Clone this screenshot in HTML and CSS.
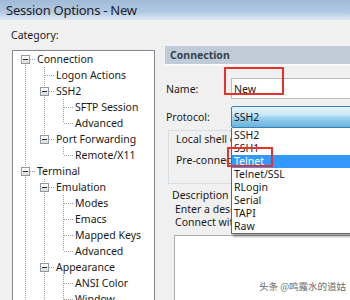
FILE: index.html
```html
<!DOCTYPE html>
<html>
<head>
<meta charset="utf-8">
<link rel="stylesheet" href="styles.css">
</head>
<body>
<div class="window">
  <div class="titlebar">Session Options - New</div>
  <div class="content">
    <div class="left">
      <div class="cat-label">Category:</div>
      <div class="tree">
        <div class="row"><span class="c root-first"><span class="box"></span></span><span class="t">Connection</span></div>
        <div class="row"><span class="c v"></span><span class="c tee"></span><span class="t">Logon Actions</span></div>
        <div class="row"><span class="c v"></span><span class="c tee"><span class="box"></span></span><span class="t">SSH2</span></div>
        <div class="row"><span class="c v"></span><span class="c v"></span><span class="c tee"></span><span class="t">SFTP Session</span></div>
        <div class="row"><span class="c v"></span><span class="c v"></span><span class="c elbow"></span><span class="t">Advanced</span></div>
        <div class="row"><span class="c v"></span><span class="c elbow"><span class="box"></span></span><span class="t">Port Forwarding</span></div>
        <div class="row"><span class="c v"></span><span class="c"></span><span class="c elbow"></span><span class="t">Remote/X11</span></div>
        <div class="row"><span class="c tee"><span class="box"></span></span><span class="t">Terminal</span></div>
        <div class="row"><span class="c v"></span><span class="c tee"><span class="box"></span></span><span class="t">Emulation</span></div>
        <div class="row"><span class="c v"></span><span class="c v"></span><span class="c tee"></span><span class="t">Modes</span></div>
        <div class="row"><span class="c v"></span><span class="c v"></span><span class="c tee"></span><span class="t">Emacs</span></div>
        <div class="row"><span class="c v"></span><span class="c v"></span><span class="c tee"></span><span class="t">Mapped Keys</span></div>
        <div class="row"><span class="c v"></span><span class="c v"></span><span class="c elbow"></span><span class="t">Advanced</span></div>
        <div class="row"><span class="c v"></span><span class="c tee"><span class="box"></span></span><span class="t">Appearance</span></div>
        <div class="row"><span class="c v"></span><span class="c v"></span><span class="c tee"></span><span class="t">ANSI Color</span></div>
        <div class="row"><span class="c v"></span><span class="c v"></span><span class="c tee"></span><span class="t">Window</span></div>
      </div>
    </div>
    <div class="right">
      <div class="header">Connection</div>
      <div class="form-row name-row">
        <span class="label">Name:</span>
        <div class="input">New</div>
      </div>
      <div class="form-row proto-row">
        <span class="label">Protocol:</span>
        <div class="combo-wrap">
          <div class="combo">SSH2</div>
          <ul class="dropdown">
            <li>SSH2</li>
            <li>SSH1</li>
            <li class="sel">Telnet</li>
            <li>Telnet/SSL</li>
            <li>RLogin</li>
            <li>Serial</li>
            <li>TAPI</li>
            <li>Raw</li>
          </ul>
        </div>
      </div>
      <div class="frame">
        <div class="frame-line first">Local shell code page:</div>
        <div class="frame-line">Pre-connect commands</div>
      </div>
      <div class="desc">
        <div class="desc-label">Description</div>
        <div class="desc-text">Enter a description of the session here.</div>
        <div class="desc-text">Connect with a single click.</div>
        <div class="textarea">
          <span class="watermark">头条 @鸣露水的道姑</span>
        </div>
      </div>
    </div>
  </div>
  <div class="mark mark-name"></div>
  <div class="mark mark-telnet"></div>
</div>
</body>
</html>
```

FILE: styles.css
```css
* { box-sizing: border-box; }
html, body { margin: 0; padding: 0; }
body {
  width: 350px;
  height: 300px;
  overflow: hidden;
  background: #f0f0f0;
  font-family: "Noto Sans", "Noto Sans CJK SC", sans-serif;
  font-size: 10.5px;
  color: #1a1a1a;
}
.window {
  position: relative;
  width: 350px;
  height: 300px;
  overflow: hidden;
}
.titlebar {
  height: 20px;
  padding-left: 6px;
  display: flex;
  align-items: center;
  font-size: 13px;
  letter-spacing: -0.25px;
  color: #1e2228;
  background: linear-gradient(#a0bad7 0%, #b3c9e2 60%, #c9daed 80%, #dce7f3 100%);
}
.content {
  display: flex;
  align-items: flex-start;
}
.left {
  flex: none;
  width: 155px;
  padding-left: 12px;
  padding-top: 8px;
}
.cat-label {
  margin-left: -1px;
  line-height: 14px;
  height: 14px;
}
.tree {
  margin-top: 8px;
  width: 143px;
  height: 260px;
  background: #fff;
  border: 1px solid #828790;
  padding-left: 3px;
  overflow: hidden;
}
.row {
  display: flex;
  height: 16px;
  align-items: flex-start;
}
.c {
  flex: none;
  width: 19px;
  height: 16px;
  display: flex;
  justify-content: center;
  align-items: flex-start;
  background-repeat: no-repeat;
}
.v {
  background-image: repeating-linear-gradient(to bottom, #a0a0a0 0 1px, transparent 1px 2px);
  background-position: 9px 0;
  background-size: 1px 16px;
}
.tee {
  background-image:
    repeating-linear-gradient(to bottom, #a0a0a0 0 1px, transparent 1px 2px),
    repeating-linear-gradient(to right, #a0a0a0 0 1px, transparent 1px 2px);
  background-position: 9px 0, 10px 8px;
  background-size: 1px 16px, 9px 1px;
}
.elbow {
  background-image:
    repeating-linear-gradient(to bottom, #a0a0a0 0 1px, transparent 1px 2px),
    repeating-linear-gradient(to right, #a0a0a0 0 1px, transparent 1px 2px);
  background-position: 9px 0, 10px 8px;
  background-size: 1px 8px, 9px 1px;
}
.root-first {
  background-image:
    repeating-linear-gradient(to bottom, #a0a0a0 0 1px, transparent 1px 2px),
    repeating-linear-gradient(to right, #a0a0a0 0 1px, transparent 1px 2px);
  background-position: 9px 8px, 10px 8px;
  background-size: 1px 8px, 9px 1px;
}
.box {
  width: 9px;
  height: 9px;
  margin-top: 4px;
  border: 1px solid #8f9aa6;
  background:
    linear-gradient(#2a2a2a, #2a2a2a) center / 5px 1px no-repeat,
    linear-gradient(#ffffff, #dcdcdc);
}
.t {
  margin-left: 2px;
  line-height: 16px;
  white-space: nowrap;
}

.right {
  flex: 1;
  min-width: 0;
  margin-left: 10px;
  padding-top: 25px;
}
.header {
  height: 21px;
  border-top: 1px solid #f4f7fa;
  border-bottom: 2px solid #f9fafc;
  background: #bfccd8;
  padding-left: 5px;
  display: flex;
  align-items: center;
  font-weight: bold;
  color: #36424e;
  white-space: nowrap;
}
.form-row {
  display: flex;
  align-items: center;
  padding-left: 1px;
}
.label {
  flex: none;
  width: 65px;
  white-space: nowrap;
}
.name-row {
  margin-top: 12px;
}
.input {
  width: 140px;
  height: 21px;
  background: #fff;
  border: 1px solid #b8bcc4;
  padding-left: 2px;
  display: flex;
  align-items: center;
  flex: none;
}
.proto-row {
  margin-top: 7px;
}
.combo-wrap {
  position: relative;
  flex: none;
  width: 140px;
}
.combo {
  height: 22px;
  border: 1px solid #3c7fb1;
  border-radius: 2px;
  padding-left: 2px;
  display: flex;
  align-items: center;
  background: linear-gradient(#e5f4fc 0%, #c9e8f8 40%, #98d1ef 55%, #68b3db 100%);
}
.dropdown {
  position: absolute;
  top: 100%;
  left: 0;
  z-index: 5;
  width: 140px;
  margin: 0;
  padding: 1px 0 0 0;
  list-style: none;
  background: #fff;
  border-left: 1px solid #646464;
  border-bottom: 1px solid #646464;
  box-shadow: 2px 3px 2px rgba(0,0,0,0.3);
}
.dropdown li {
  height: 13px;
  line-height: 13px;
  padding-left: 2px;
  white-space: nowrap;
}
.dropdown li.sel {
  background: #3399ff;
  color: #fff;
}
.frame {
  margin-top: 2px;
  margin-left: 3px;
  border: 1px solid #d5dfe5;
  border-right: none;
  height: 54px;
  padding-left: 7px;
  padding-top: 1px;
}
.frame-line {
  line-height: 14px;
  white-space: nowrap;
}
.frame-line + .frame-line {
  margin-top: 7px;
}
.desc {
  margin-top: 4px;
  padding-left: 10px;
}
.desc-label {
  margin-left: -3px;
  line-height: 14px;
  white-space: nowrap;
}
.desc-text {
  line-height: 13px;
  white-space: nowrap;
  margin-top: 1px;
}
.desc-text + .desc-text {
  margin-top: 0;
}
.textarea {
  margin-top: 6px;
  margin-left: -1px;
  height: 80px;
  background: #fff;
  border: 1px solid #abadb3;
  border-right: none;
  display: flex;
  justify-content: flex-start;
  align-items: flex-start;
  padding-left: 84px;
  padding-top: 44px;
}
.watermark {
  font-family: "Noto Sans CJK SC", sans-serif;
  font-size: 9.5px;
  line-height: 13px;
  color: #6a6a6a;
  white-space: nowrap;
}
.mark {
  position: absolute;
  border: 2px solid #e8302c;
  z-index: 10;
}
.mark-name {
  left: 224px;
  top: 67px;
  width: 60px;
  height: 28px;
}
.mark-telnet {
  left: 227px;
  top: 147px;
  width: 46px;
  height: 20px;
}
```
